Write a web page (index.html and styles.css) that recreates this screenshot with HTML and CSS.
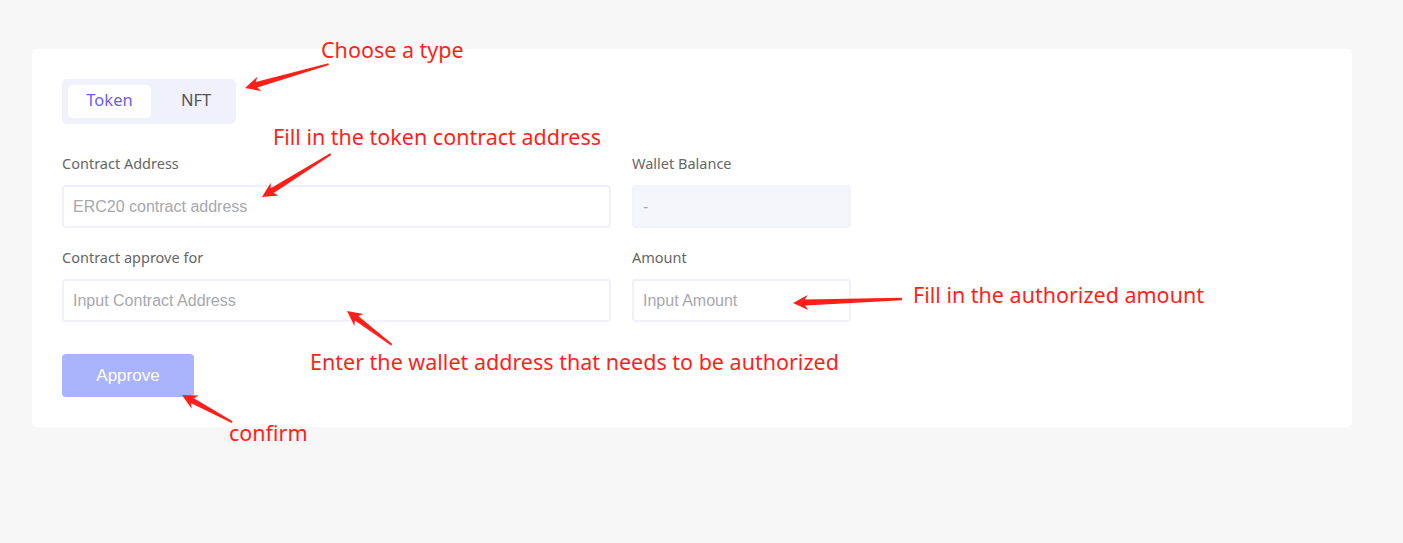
FILE: index.html
```html
<!DOCTYPE html>
<html lang="en">
<head>
  <meta charset="UTF-8">
  <meta name="viewport" content="width=device-width, initial-scale=1">
  <title>Approve</title>
  <link rel="stylesheet" href="styles.css">
</head>
<body>
  <!-- Approve card -->
  <div class="card">
    <div class="type-switch">
      <span class="type-item active">Token</span>
      <span class="type-item">NFT</span>
    </div>

    <div class="form-row">
      <div class="form-group wide">
        <label>Contract Address</label>
        <input type="text" placeholder="ERC20 contract address">
      </div>
      <div class="form-group narrow">
        <label>Wallet Balance</label>
        <div class="readonly">-</div>
      </div>
    </div>

    <div class="form-row">
      <div class="form-group wide">
        <label>Contract approve for</label>
        <input type="text" placeholder="Input Contract Address">
      </div>
      <div class="form-group narrow">
        <label>Amount</label>
        <input type="text" placeholder="Input Amount">
      </div>
    </div>

    <button class="approve-btn">Approve</button>
  </div>

  <!-- Annotations drawn over the screenshot -->
  <div class="note note-type">Choose a type</div>
  <div class="note note-contract">Fill in the token contract address</div>
  <div class="note note-wallet">Enter the wallet address that needs to be authorized</div>
  <div class="note note-amount">Fill in the authorized amount</div>
  <div class="note note-confirm">confirm</div>

  <svg class="arrows" width="1403" height="543" viewBox="0 0 1403 543">
    <g fill="#ff1f1a">
      <polygon transform="translate(245 88) rotate(-15.95)" points="0,0 15,-7.5 12,-2.8 87,-1 87,1 12,2.8 15,7.5"/>
      <polygon transform="translate(262 197) rotate(-31.93)" points="0,0 15,-7.5 12,-2.8 81,-1 81,1 12,2.8 15,7.5"/>
      <polygon transform="translate(347 311) rotate(37.07)" points="0,0 15,-7.5 12,-2.8 56,-1 56,1 12,2.8 15,7.5"/>
      <polygon transform="translate(793 303) rotate(-2.1)" points="0,0 15,-7.5 12,-3 109,-1.2 109,1.2 12,3 15,7.5"/>
      <polygon transform="translate(182 395) rotate(28.37)" points="0,0 15,-7.5 12,-2.8 57,-1 57,1 12,2.8 15,7.5"/>
    </g>
  </svg>
</body>
</html>
```

FILE: styles.css
```css
body {
  font-family: "Noto Sans", "Liberation Sans", sans-serif;
  background: #f7f7f7;
  margin: 0;
  padding: 49px 51px 0 32px;
  color: #555;
}
.card {
  background: #fff;
  border-radius: 6px;
  padding: 30px 30px 31px;
  height: 317px;
}
.type-switch {
  display: inline-flex;
  background: #f1f1fd;
  border-radius: 5px;
  padding: 6px;
  margin-bottom: 31px;
}
.type-item {
  height: 33px;
  line-height: 30px;
  text-align: center;
  font-size: 16.5px;
  color: #555;
  border-radius: 5px;
}
.type-item:first-child {
  width: 83px;
}
.type-item:last-child {
  width: 49px;
  padding-left: 30px;
  text-align: left;
}
.type-item.active {
  background: #fff;
  color: #6e5cf6;
}
.form-row {
  display: flex;
  gap: 21px;
  margin-bottom: 21px;
}
.form-group label {
  display: block;
  font-size: 14.5px;
  line-height: 16px;
  color: #666;
  margin-bottom: 14px;
}
.form-group.wide {
  width: 549px;
}
.form-group.narrow {
  width: 219px;
}
.form-group input,
.readonly {
  display: block;
  width: 100%;
  height: 43px;
  box-sizing: border-box;
  border: 2px solid #f0f0fc;
  border-radius: 4px;
  padding: 0 9px;
  font-family: "Liberation Sans", Arial, sans-serif;
  font-size: 16px;
  color: #333;
  outline: none;
  background: #fff;
}
.form-group input::placeholder {
  color: #a7a7ae;
}
.readonly {
  background: #f5f6fb;
  border-color: #f3f4fa;
  line-height: 39px;
  color: #aaa;
}
.approve-btn {
  margin-top: 11px;
  width: 132px;
  height: 43px;
  border: none;
  border-radius: 4px;
  background: #aab4fd;
  color: #fff;
  font-family: "Liberation Sans", Arial, sans-serif;
  font-size: 17px;
  cursor: pointer;
}
.note {
  position: absolute;
  color: #ff1f1a;
  font-family: "Noto Sans", sans-serif;
  font-size: 21.5px;
  line-height: 26px;
  white-space: nowrap;
}
.note-type { left: 321px; top: 37px; }
.note-contract { left: 273px; top: 124px; }
.note-wallet { left: 310px; top: 349px; }
.note-amount { left: 913px; top: 282px; }
.note-confirm { left: 229px; top: 420px; }
.arrows {
  position: absolute;
  left: 0;
  top: 0;
  pointer-events: none;
}
```
